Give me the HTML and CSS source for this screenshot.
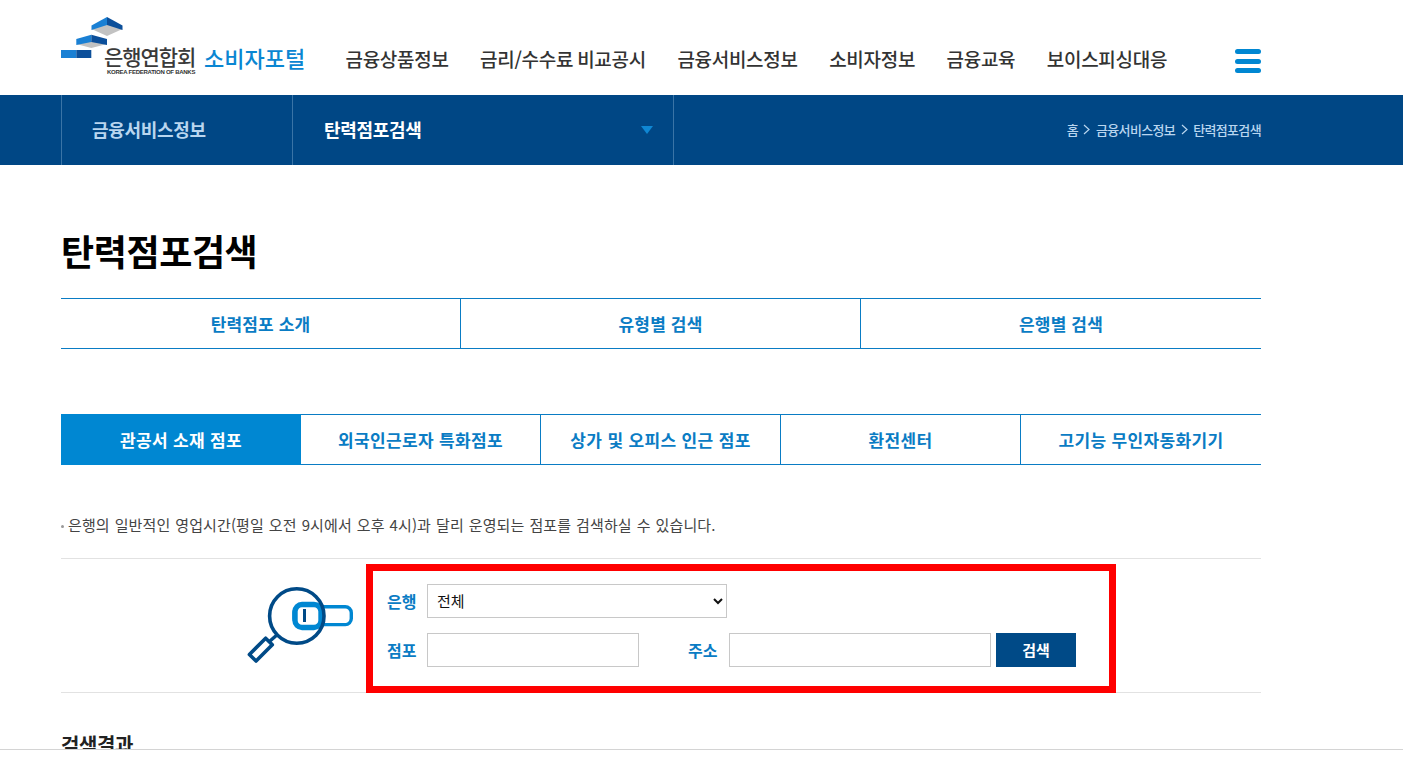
FILE: index.html
```html
<!DOCTYPE html>
<html lang="ko">
<head>
<meta charset="utf-8">
<title>탄력점포검색</title>
<link rel="stylesheet" href="styles.css">
</head>
<body>
<div class="page">
  <header class="header">
    <div class="wrap header-row">
      <a class="logo">
        <svg class="logo-mark" width="62" height="48" viewBox="0 0 62 48">
          <polygon points="30.5,13 46,8 61.5,13 46,20" fill="#c2c2c2"/>
          <polygon points="30.5,9.5 46,1 46,9 30.5,14" fill="#1a80d4"/>
          <polygon points="46,1 61.5,9.5 61.5,14 46,9" fill="#0c4f9a"/>
          <polygon points="15.3,28 30.3,25 46,28 30.3,32" fill="#c2c2c2"/>
          <polygon points="15.3,23 30.3,18.7 30.3,26 15.3,29" fill="#1a80d4"/>
          <polygon points="30.3,18.7 46,23 46,29 30.3,26" fill="#0c4f9a"/>
          <rect x="0" y="34" width="15.3" height="8" fill="#1a80d4"/>
          <rect x="15.3" y="34" width="15" height="8" fill="#0c4f9a"/>
        </svg>
        <span class="logo-org"><span class="logo-name">은행연합회</span><span class="logo-en">KOREA FEDERATION OF BANKS</span></span>
        <span class="logo-portal">소비자포털</span>
      </a>
      <nav class="gnb">
        <a>금융상품정보</a><a>금리/수수료 비교공시</a><a>금융서비스정보</a><a>소비자정보</a><a>금융교육</a><a>보이스피싱대응</a>
      </nav>
      <button class="burger" aria-label="메뉴"><i></i><i></i><i></i></button>
    </div>
  </header>
  <div class="subbar">
    <div class="wrap subbar-row">
      <div class="sub-first">금융서비스정보</div>
      <div class="sub-second"><span>탄력점포검색</span><i class="caret"></i></div>
      <div class="crumbs">
        <span>홈</span>
        <svg class="chev" width="7" height="11" viewBox="0 0 7 11"><path d="M1 1l5 4.5-5 4.5" fill="none" stroke="#b9d6ef" stroke-width="1.2"/></svg>
        <span>금융서비스정보</span>
        <svg class="chev" width="7" height="11" viewBox="0 0 7 11"><path d="M1 1l5 4.5-5 4.5" fill="none" stroke="#b9d6ef" stroke-width="1.2"/></svg>
        <span>탄력점포검색</span>
      </div>
    </div>
  </div>
  <main class="wrap main">
    <h1 class="title">탄력점포검색</h1>
    <div class="tabs-top">
      <a>탄력점포 소개</a><a>유형별 검색</a><a>은행별 검색</a>
    </div>
    <div class="tabs-sub">
      <a class="on">관공서 소재 점포</a><a>외국인근로자 특화점포</a><a>상가 및 오피스 인근 점포</a><a>환전센터</a><a>고기능 무인자동화기기</a>
    </div>
    <p class="note"><i class="dot"></i>은행의 일반적인 영업시간(평일 오전 9시에서 오후 4시)과 달리 운영되는 점포를 검색하실 수 있습니다.</p>
    <section class="search">
      <svg class="search-icon" width="110" height="80" viewBox="0 0 110 80">
        <rect x="49" y="19.7" width="57.3" height="17.9" rx="6" fill="#fff" stroke="#0087d2" stroke-width="3.4"/>
        <rect x="50" y="17.5" width="26" height="23" rx="7" fill="#fff" stroke="#0087d2" stroke-width="5.4"/>
        <circle cx="51.8" cy="29" r="27.2" fill="none" stroke="#004a87" stroke-width="3.6"/>
        <rect x="58" y="22" width="3" height="13" fill="#004a87"/>
        <path d="M25 54L33 47" stroke="#004a87" stroke-width="3.4"/>
        <rect x="-4.7" y="-12" width="9.4" height="23" transform="translate(15.5 63) rotate(45)" fill="#fff" stroke="#004a87" stroke-width="3.6" stroke-linejoin="round"/>
      </svg>
      <form class="search-form">
        <div class="field-row">
          <label class="lab">은행</label>
          <select class="sel"><option>전체</option></select>
        </div>
        <div class="field-row">
          <label class="lab">점포</label>
          <input class="inp inp-branch" type="text">
          <label class="lab lab-addr">주소</label>
          <input class="inp inp-addr" type="text">
          <button class="btn" type="button">검색</button>
        </div>
      </form>
      <div class="highlight"></div>
    </section>
    <h2 class="result">검색결과</h2>
  </main>
</div>
</body>
</html>
```
FILE: styles.css
```css
* { box-sizing: border-box; }
html, body { margin: 0; padding: 0; background: #fff; }
body { font-family: "Noto Sans CJK KR", "Noto Sans", sans-serif; color: #333; }
a { color: inherit; text-decoration: none; }
.page { height: 750px; overflow: hidden; border-bottom: 1px solid #d4d4d4; }
.wrap { width: 1200px; margin-left: 61px; }

.header { height: 95px; }
.header-row { display: flex; align-items: flex-start; position: relative; height: 95px; }
.logo { display: flex; position: relative; width: 245px; height: 95px; flex: none; }
.logo-mark { position: absolute; left: 0; top: 16px; }
.logo-org { position: absolute; left: 43px; top: 44px; display: flex; flex-direction: column; width: 92px; }
.logo-name { font-size: 21px; font-weight: 500; line-height: 25px; letter-spacing: -1.1px; color: #3a3a3a; white-space: nowrap; }
.logo-en { font-family: "Liberation Sans", sans-serif; font-size: 6px; font-weight: 700; line-height: 7px; color: #333; white-space: nowrap; letter-spacing: -0.26px; margin-left: 3px; }
.logo-portal { position: absolute; left: 143px; top: 39px; font-size: 22px; font-weight: 500; line-height: 36px; color: #0a86d2; white-space: nowrap; }
.gnb { display: flex; gap: 31.5px; margin-left: 39.5px; padding-top: 43px; font-size: 19px; font-weight: 500; line-height: 32px; letter-spacing: -0.3px; word-spacing: -1px; color: #333; white-space: nowrap; }
.burger { position: absolute; right: 0; top: 49px; width: 26px; height: 24px; padding: 0; border: 0; background: none; display: flex; flex-direction: column; justify-content: space-between; }
.burger i { display: block; height: 5px; border-radius: 3px; background: #0087d2; }

.subbar { height: 70px; background: #004785; }
.subbar-row { display: flex; align-items: center; height: 70px; }
.sub-first { width: 231px; height: 70px; border-left: 1px solid #3a74a6; padding-left: 30px; font-size: 18px; font-weight: 700; line-height: 68px; letter-spacing: -0.3px; color: #b9d6ef; }
.sub-second { width: 382px; height: 70px; border-left: 1px solid #3a74a6; border-right: 1px solid #3a74a6; padding: 0 20px 2px 31px; display: flex; align-items: center; justify-content: space-between; font-size: 18px; font-weight: 700; letter-spacing: -0.33px; color: #fff; }
.caret { width: 0; height: 0; border-left: 6px solid transparent; border-right: 6px solid transparent; border-top: 8px solid #0f87d3; margin-top: 2px; }
.crumbs { margin-left: auto; margin-top: -2px; display: flex; align-items: center; gap: 5.5px; font-size: 13px; font-weight: 500; letter-spacing: -0.65px; color: #b9d6ef; white-space: nowrap; }

.main { position: relative; }
.title { margin: 57px 0 0; font-size: 36px; font-weight: 700; line-height: 56px; letter-spacing: -0.4px; color: #000; }
.tabs-top { margin-top: 20px; display: grid; grid-template-columns: 400px 400px 400px; height: 51px; border-top: 1px solid #0a7cc4; border-bottom: 1px solid #0a7cc4; }
.tabs-top a { display: flex; align-items: center; justify-content: center; font-size: 17px; font-weight: 700; letter-spacing: 0.15px; color: #0a7cc4; border-right: 1px solid #0a7cc4; }
.tabs-top a:last-child { border-right: 0; }
.tabs-sub { margin-top: 65px; display: grid; grid-template-columns: 240px 240px 240px 240px 240px; width: 1200px; height: 51px; border-top: 1px solid #0a7cc4; border-bottom: 1px solid #0a7cc4; }
.tabs-sub a { display: flex; align-items: center; justify-content: center; font-size: 17px; font-weight: 700; letter-spacing: 0.35px; color: #0a7cc4; border-right: 1px solid #0a7cc4; white-space: nowrap; }
.tabs-sub a:last-child { border-right: 0; }
.tabs-sub a.on { background: #0087d2; color: #fff; margin: -1px 0; border-right: 0; }

.note { display: flex; align-items: center; margin: 48px 0 0; font-size: 15px; line-height: 24px; letter-spacing: 0.1px; word-spacing: 0.7px; color: #444; }
.dot { width: 3px; height: 3px; border-radius: 50%; background: #999; margin-right: 4px; margin-top: 3px; }

.search { position: relative; margin-top: 21px; height: 135px; border-top: 1px solid #e2e2e2; border-bottom: 1px solid #e2e2e2; }
.search-icon { position: absolute; left: 184px; top: 28px; }
.search-form { position: absolute; left: 326px; top: 25px; display: flex; flex-direction: column; gap: 15px; }
.field-row { display: flex; align-items: center; height: 34px; }
.lab { width: 40px; font-size: 16px; font-weight: 700; color: #0a7cc4; line-height: 34px; white-space: nowrap; }
.lab-addr { width: 41px; margin-left: 49px; }
.sel { width: 300px; height: 34px; border: 1px solid #c8c8c8; background: #fff; font-family: inherit; font-size: 15px; color: #111; padding: 0 0 2px 5px; }
.inp { height: 34px; border: 1px solid #c8c8c8; background: #fff; }
.inp-branch { width: 212px; }
.inp-addr { width: 262px; }
.btn { width: 80px; height: 34px; margin-left: 5px; padding: 0 0 2px; border: 0; background: #004a87; color: #fff; font-family: inherit; font-size: 15px; font-weight: 700; }
.highlight { position: absolute; left: 305px; top: 5px; width: 750px; height: 129px; border: 7px solid #f00; pointer-events: none; }

.result { margin: 37px 0 0; font-size: 20px; font-weight: 700; line-height: 30px; letter-spacing: -0.4px; color: #222; }
```
